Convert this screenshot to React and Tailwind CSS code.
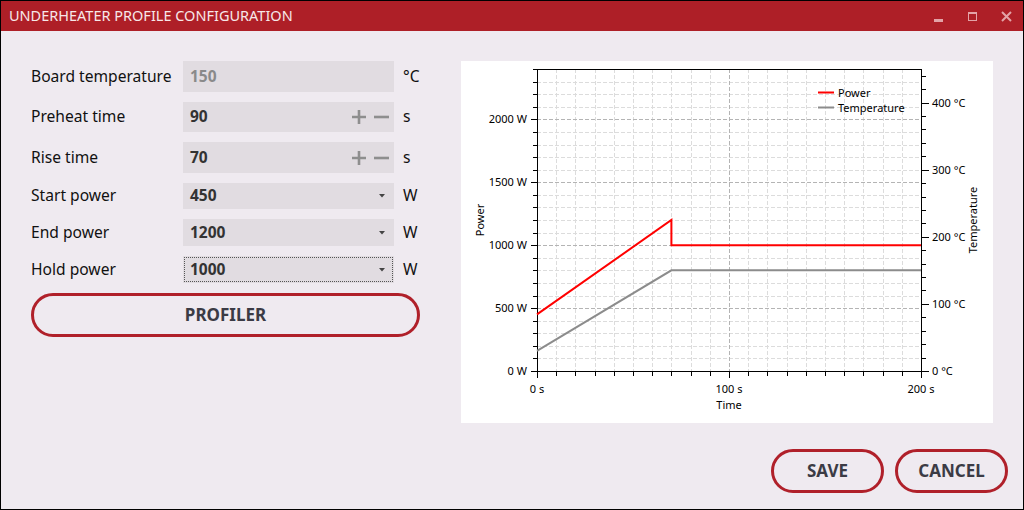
import React from 'react';

// plot geometry, in panel coordinates (panel is 532 x 362)
const L = 76, T = 8, R = 460, B = 310;
const xs = (t) => L + (t * (R - L)) / 200;
const yp = (w) => B - (w * (B - T)) / 2400;
const yt = (c) => B - (c * (B - T)) / 450;

const range = (a, b, s) => {
  const out = [];
  for (let v = a; v <= b; v += s) out.push(v);
  return out;
};

const Chart = () => {
  const power = [[0, 450], [70, 1200], [70, 1000], [200, 1000]];
  const temp = [[0, 30], [70, 150], [200, 150]];
  const pts = (arr, f) => arr.map(([t, v]) => `${xs(t)},${f(v)}`).join(' ');

  return (
    <svg width="532" height="362" viewBox="0 0 532 362" className="block">
      <g shapeRendering="crispEdges" strokeWidth="1">
        {range(10, 190, 10).filter(t => t !== 100).map(t => (
          <line key={'vm' + t} x1={xs(t) + 0.5} x2={xs(t) + 0.5} y1={T} y2={B} stroke="#dcdcdc" strokeDasharray="4 2" />
        ))}
        {range(100, 2300, 100).filter(w => w % 500 !== 0).map(w => (
          <line key={'hm' + w} x1={L} x2={R} y1={Math.round(yp(w)) + 0.5} y2={Math.round(yp(w)) + 0.5} stroke="#dcdcdc" strokeDasharray="4 2" />
        ))}
        <line x1={xs(100) + 0.5} x2={xs(100) + 0.5} y1={T} y2={B} stroke="#b4b4b4" strokeDasharray="4 2" />
        {[500, 1000, 1500, 2000].map(w => (
          <line key={'hM' + w} x1={L} x2={R} y1={Math.round(yp(w)) + 0.5} y2={Math.round(yp(w)) + 0.5} stroke="#b4b4b4" strokeDasharray="4 2" />
        ))}

        {/* axes */}
        <rect x={L + 0.5} y={T + 0.5} width={R - L} height={B - T} fill="none" stroke="#000" />

        {/* left ticks */}
        {range(0, 2400, 100).map(w => (
          <line key={'lt' + w} x1={w % 500 === 0 ? L - 6 : L - 4} x2={L} y1={Math.round(yp(w)) + 0.5} y2={Math.round(yp(w)) + 0.5} stroke="#000" />
        ))}
        {/* right ticks */}
        {range(0, 440, 20).map(c => (
          <line key={'rt' + c} x1={R} x2={c % 100 === 0 ? R + 8 : R + 5} y1={Math.round(yt(c)) + 0.5} y2={Math.round(yt(c)) + 0.5} stroke="#000" />
        ))}
        {/* bottom ticks */}
        {range(0, 200, 10).map(t => (
          <line key={'bt' + t} x1={Math.round(xs(t)) + 0.5} x2={Math.round(xs(t)) + 0.5} y1={B} y2={t % 100 === 0 ? B + 7 : B + 5} stroke="#000" />
        ))}
      </g>

      <polyline points={pts(temp, yt)} fill="none" stroke="#8c8c8c" strokeWidth="2" />
      <polyline points={pts(power, yp)} fill="none" stroke="#ff0000" strokeWidth="2" />

      <g fontSize="11" fill="#000" fontFamily="'Noto Sans', 'Open Sans', sans-serif">
        {[0, 500, 1000, 1500, 2000].map(w => (
          <text key={'ll' + w} x={L - 10} y={yp(w) + 4} textAnchor="end">{w} W</text>
        ))}
        {[0, 100, 200, 300, 400].map(c => (
          <text key={'rl' + c} x={R + 11} y={yt(c) + 4}>{c} °C</text>
        ))}
        {[0, 100, 200].map(t => (
          <text key={'bl' + t} x={xs(t)} y={332} textAnchor="middle">{t} s</text>
        ))}
        <text x={xs(100)} y={348} textAnchor="middle">Time</text>
        <text transform="translate(23 159) rotate(-90)" textAnchor="middle">Power</text>
        <text transform="translate(516 159) rotate(-90)" textAnchor="middle">Temperature</text>

        <line x1="357" x2="373" y1="31.5" y2="31.5" stroke="#ff0000" strokeWidth="2" />
        <text x="377" y="35.5">Power</text>
        <line x1="357" x2="373" y1="46.5" y2="46.5" stroke="#8c8c8c" strokeWidth="2" />
        <text x="377" y="50.5">Temperature</text>
      </g>
    </svg>
  );
};

const Plus = () => (
  <svg width="14" height="14" viewBox="0 0 14 14">
    <path d="M7 0v14M0 7h14" stroke="#8e8e8e" strokeWidth="2.6" />
  </svg>
);

const Minus = () => (
  <svg width="15" height="14" viewBox="0 0 15 14">
    <path d="M0 7h15" stroke="#8e8e8e" strokeWidth="2.6" />
  </svg>
);

const Caret = () => (
  <svg width="6" height="4" viewBox="0 0 6 4">
    <path d="M0 0h6L3 3.5z" fill="#444" />
  </svg>
);

const Row = ({ label, unit, box }) => (
  <div className="flex items-center">
    <div className="w-[152px] text-[15.6px] text-[#111]">{label}</div>
    {box}
    <div className="ml-[9px] text-[15.6px] text-[#111]">{unit}</div>
  </div>
);

const SpinBox = ({ value, h }) => (
  <div className={`w-[211px] ${h} bg-[#e1dce1] flex items-center pl-[7px] pr-[5px]`}>
    <span className="text-[15.5px] font-bold text-[#333]">{value}</span>
    <div className="ml-auto flex items-center gap-[8px]">
      <Plus />
      <Minus />
    </div>
  </div>
);

const Select = ({ value, h, focused }) => (
  <div className={`relative w-[211px] ${h} bg-[#e1dce1] flex items-center pl-[7px] pr-[9px]`}>
    {focused && <div className="absolute inset-[1px] border border-dotted border-[#555]" />}
    <span className="text-[15.5px] font-bold text-[#333]">{value}</span>
    <div className="ml-auto"><Caret /></div>
  </div>
);

export default function App() {
  return (
    <div className="w-[1024px] h-[510px] border border-black bg-[#efeaf0] flex flex-col overflow-hidden font-['Noto_Sans','Open_Sans',sans-serif]">
      {/* title bar */}
      <div className="h-[30px] shrink-0 bg-[#ae1f27] flex items-center">
        <span className="pl-[8px] text-[14.5px] text-[#f7e8e9]">UNDERHEATER PROFILE CONFIGURATION</span>
        <div className="ml-auto flex h-full">
          <div className="w-[34px] h-full flex items-center justify-center">
            <div className="w-[9px] h-[3px] mt-[8px] bg-[#e3a3a7]" />
          </div>
          <div className="w-[34px] h-full flex items-center justify-center">
            <div className="w-[9px] h-[9px] border border-t-[2px] border-[#e3a3a7]" />
          </div>
          <div className="w-[34px] h-full flex items-center justify-center">
            <svg width="11" height="11" viewBox="0 0 11 11">
              <path d="M1 1l9 9M10 1l-9 9" stroke="#e3a3a7" strokeWidth="2" />
            </svg>
          </div>
        </div>
      </div>

      <div className="flex-1 flex flex-col">
        <div className="flex pt-[30px] pl-[30px]">
          <div className="w-[389px] flex flex-col gap-[10px]">
            <Row label="Board temperature" unit="°C" box={
              <div className="w-[211px] h-[31px] bg-[#e1dce1] flex items-center pl-[7px]">
                <span className="text-[15.5px] font-bold text-[#8a8a8a]">150</span>
              </div>
            } />
            <Row label="Preheat time" unit="s" box={<SpinBox value="90" h="h-[30px]" />} />
            <Row label="Rise time" unit="s" box={<SpinBox value="70" h="h-[31px]" />} />
            <Row label="Start power" unit="W" box={<Select value="450" h="h-[26px]" />} />
            <Row label="End power" unit="W" box={<Select value="1200" h="h-[27px]" />} />
            <Row label="Hold power" unit="W" box={<Select value="1000" h="h-[27px]" focused />} />
            <button className="h-[44px] w-[389px] rounded-full border-[3px] border-[#b0202a] text-[17px] font-bold text-[#3b3b45]">
              PROFILER
            </button>
          </div>

          <div className="ml-[41px] w-[532px] h-[362px] bg-white">
            <Chart />
          </div>
        </div>

        <div className="flex justify-end gap-[11px] pr-[15px] mt-[26px]">
          <button className="w-[113px] h-[44px] rounded-full border-[3px] border-[#b0202a] text-[17px] font-bold text-[#3b3b45]">SAVE</button>
          <button className="w-[113px] h-[44px] rounded-full border-[3px] border-[#b0202a] text-[17px] font-bold text-[#3b3b45]">CANCEL</button>
        </div>
      </div>
    </div>
  );
}
